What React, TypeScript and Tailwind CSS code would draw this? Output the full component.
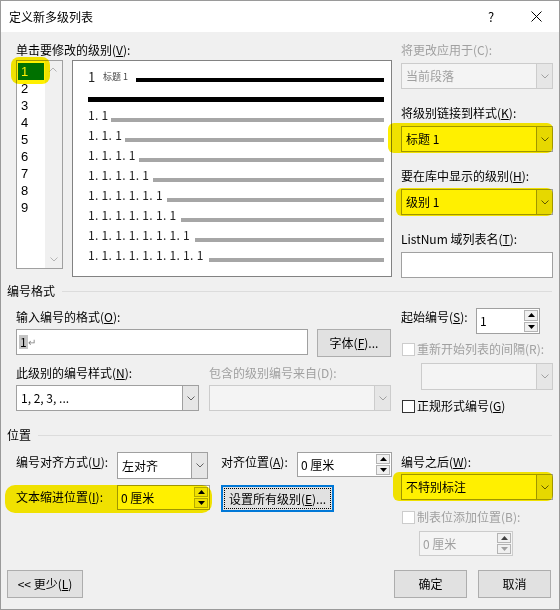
import React from "react";

const FONT = "font-['Noto_Sans_CJK_SC',sans-serif]";

function Chevron({ color = "#606060" }: { color?: string }) {
  return (
    <svg width="8" height="5" viewBox="0 0 8 5">
      <path d="M0.5 0.5 L4 4 L7.5 0.5" fill="none" stroke={color} strokeWidth="1" />
    </svg>
  );
}

function Tri({ up, color = "#000" }: { up?: boolean; color?: string }) {
  return (
    <svg width="7" height="4" viewBox="0 0 7 4">
      <path d={up ? "M0 4 L3.5 0 L7 4 Z" : "M0 0 L3.5 4 L7 0 Z"} fill={color} />
    </svg>
  );
}

function Combo({ value, className, disabled = false }: { value?: string; className: string; disabled?: boolean }) {
  return (
    <div
      className={`flex border ${
        disabled ? "border-[#cccccc] bg-[#f4f4f4] text-[#a0a0a0]" : "border-[#a0a0a0] bg-white text-black"
      } ${className}`}
    >
      <div className="flex flex-1 items-center pl-[4px] whitespace-nowrap">{value}</div>
      <div
        className={`flex w-[16px] items-center justify-center border-l ${
          disabled ? "border-[#cccccc] bg-[#e6e6e6]" : "border-[#a0a0a0] bg-[#e6e6e6]"
        }`}
      >
        <Chevron color={disabled ? "#a0a0a0" : "#606060"} />
      </div>
    </div>
  );
}

function Spin({ value, className, disabled = false }: { value: string; className: string; disabled?: boolean }) {
  return (
    <div
      className={`flex border ${
        disabled ? "border-[#cccccc] bg-[#f4f4f4] text-[#a0a0a0]" : "border-[#a0a0a0] bg-white text-black"
      } ${className}`}
    >
      <div className="flex flex-1 items-center pl-[3px] whitespace-nowrap">{value}</div>
      <div className="flex w-[16px] flex-col gap-[1px] p-[1px]">
        <div className="flex flex-1 items-center justify-center border border-[#b4b4b4] bg-[#f0f0f0]">
          <Tri up color={disabled ? "#404040" : "#000"} />
        </div>
        <div className="flex flex-1 items-center justify-center border border-[#b4b4b4] bg-[#f0f0f0]">
          <Tri color={disabled ? "#a0a0a0" : "#000"} />
        </div>
      </div>
    </div>
  );
}

function Btn({ children, className, focused = false }: { children: React.ReactNode; className: string; focused?: boolean }) {
  if (focused) {
    return (
      <div className={`flex border-2 border-[#0078d7] bg-[#e1e1e1] ${className}`}>
        <div className="m-[1px] flex flex-1 items-center justify-center border border-dotted border-black whitespace-nowrap">
          {children}
        </div>
      </div>
    );
  }
  return (
    <div className={`flex items-center justify-center border border-[#adadad] bg-[#e1e1e1] whitespace-nowrap ${className}`}>
      {children}
    </div>
  );
}

function Check({ label, disabled = false }: { label: React.ReactNode; disabled?: boolean }) {
  return (
    <div className="flex h-[16px] items-center">
      <div className={`ml-[1px] h-[13px] w-[13px] border bg-white ${disabled ? "border-[#cccccc]" : "border-[#333333]"}`} />
      <span className={`ml-[2px] whitespace-nowrap ${disabled ? "text-[#a0a0a0]" : ""}`}>{label}</span>
    </div>
  );
}

function GroupHeader({ title }: { title: string }) {
  return (
    <div className="flex h-[16px] items-center pl-[6px] pr-[7px]">
      <span>{title}</span>
      <div className="ml-[7px] h-px flex-1 bg-[#dcdcdc]" />
    </div>
  );
}

function Label({ children, className = "", disabled = false }: { children: React.ReactNode; className?: string; disabled?: boolean }) {
  return (
    <div className={`h-[16px] leading-[16px] whitespace-nowrap ${disabled ? "text-[#a0a0a0]" : ""} ${className}`}>
      {children}
    </div>
  );
}

const levelWidths = ["w-[23px]", "w-[37px]", "w-[51px]", "w-[65px]", "w-[79px]", "w-[93px]", "w-[107px]", "w-[121px]"];

function Preview() {
  return (
    <div className="ml-[9px] flex h-[217px] w-[320px] flex-col border border-[#828282] bg-white pl-[15px] pr-[7px] pt-[8px] text-[#222]">
      <div className="flex h-[16px] items-center">
        <span className="w-[15px] text-[13px] leading-[16px]">1</span>
        <span className="w-[33px] text-[9px] leading-[16px] text-[#444]">标题 1</span>
        <div className="mt-[6px] h-[4px] flex-1 bg-black" />
      </div>
      <div className="mt-[12px] h-[5px] bg-black" />
      <div className="mt-[3px] flex flex-col">
        {levelWidths.map((w, i) => (
          <div key={i} className="flex h-[20px] items-center">
            <span className={`${w} shrink-0 tracking-[0.3px] leading-[16px] whitespace-nowrap`}>
              {Array.from({ length: i + 2 }, () => "1").join(". ")}
            </span>
            <div className="mt-[10px] h-[4px] flex-1 bg-[#a6a6a6]" />
          </div>
        ))}
      </div>
    </div>
  );
}

function LevelList() {
  return (
    <div className="flex h-[209px] w-[47px] border border-[#a0a0a0] bg-white">
      <div className="flex w-[28px] flex-col px-[1px] pt-[2px] font-['Liberation_Sans',sans-serif] text-[13px] leading-[15px]">
        {[1, 2, 3, 4, 5, 6, 7, 8, 9].map((n) => (
          <div
            key={n}
            className={`flex h-[17px] items-center pl-[3px] ${n === 1 ? "bg-[#0078d7] text-white" : "text-black"}`}
          >
            {n}
          </div>
        ))}
      </div>
      <div className="flex w-[17px] flex-col justify-between bg-[#f0f0f0]">
        <div className="flex h-[17px] rotate-180 items-center justify-center">
          <Chevron color="#b4b4b4" />
        </div>
        <div className="flex h-[17px] items-center justify-center">
          <Chevron color="#b4b4b4" />
        </div>
      </div>
    </div>
  );
}

export default function App() {
  return (
    <div className={`relative flex h-[610px] w-[560px] flex-col border border-[#9a9a9a] bg-[#f0f0f0] text-[12px] leading-[16px] text-black ${FONT}`}>
      {/* title bar */}
      <div className="flex h-[31px] items-center bg-white">
        <span className="pl-[8px]">定义新多级列表</span>
        <div className="ml-auto flex h-full">
          <div className="flex w-[46px] items-center justify-center text-[13px]">?</div>
          <div className="flex w-[45px] items-center justify-center">
            <svg width="11" height="11" viewBox="0 0 11 11">
              <path d="M0.5 0.5 L10.5 10.5 M10.5 0.5 L0.5 10.5" stroke="#000" strokeWidth="1" />
            </svg>
          </div>
        </div>
      </div>

      {/* levels + preview */}
      <div className="flex h-[251px] pl-[15px] pt-[10px]">
        <div className="flex w-[376px] flex-col">
          <Label>
            单击要修改的级别(<u>V</u>):
          </Label>
          <div className="mt-[2px] flex items-start">
            <LevelList />
            <Preview />
          </div>
        </div>
        <div className="ml-[9px] flex w-[152px] flex-col">
          <Label disabled>将更改应用于(C):</Label>
          <Combo className="mt-[5px] h-[26px]" value="当前段落" disabled />
          <Label className="mt-[16px]">
            将级别链接到样式(<u>K</u>):
          </Label>
          <Combo className="mt-[5px] h-[26px]" value="标题 1" />
          <Label className="mt-[16px]">
            要在库中显示的级别(<u>H</u>):
          </Label>
          <Combo className="mt-[5px] h-[26px]" value="级别 1" />
          <Label className="mt-[16px]">
            ListNum 域列表名(<u>T</u>):
          </Label>
          <div className="mt-[5px] h-[26px] border border-[#a0a0a0] bg-white" />
        </div>
      </div>

      <GroupHeader title="编号格式" />

      {/* number format */}
      <div className="flex h-[128px] pl-[15px]">
        <div className="flex w-[376px] flex-col pt-[10px]">
          <Label>
            输入编号的格式(<u>O</u>):
          </Label>
          <div className="mt-[4px] flex h-[28px] items-start">
            <div className="flex h-[26px] w-[292px] items-center border border-[#a0a0a0] bg-white pl-[2px]">
              <span className="bg-[#c4c4c4] px-px leading-[14px]">1</span>
              <span className="text-[10px] text-[#808080]">↵</span>
            </div>
            <Btn className="ml-[9px] h-[28px] w-[74px]">
              字体(<u>F</u>)...
            </Btn>
          </div>
          <div className="mt-[8px] flex">
            <Label className="w-[193px]">
              此级别的编号样式(<u>N</u>):
            </Label>
            <Label disabled>包含的级别编号来自(D):</Label>
          </div>
          <div className="mt-[4px] flex">
            <Combo className="h-[26px] w-[183px]" value="1, 2, 3, ..." />
            <Combo className="ml-[10px] h-[26px] w-[182px]" disabled />
          </div>
        </div>
        <div className="ml-[9px] flex w-[152px] flex-col pt-[9px]">
          <div className="flex items-start">
            <Label className="mt-[1px] w-[75px]">
              起始编号(<u>S</u>):
            </Label>
            <Spin className="h-[26px] w-[64px]" value="1" />
          </div>
          <div className="mt-[7px]">
            <Check label="重新开始列表的间隔(R):" disabled />
          </div>
          <Combo className="ml-[20px] mt-[6px] h-[27px] w-[132px]" disabled />
          <div className="mt-[8px]">
            <Check
              label={
                <>
                  正规形式编号(<u>G</u>)
                </>
              }
            />
          </div>
        </div>
      </div>

      <GroupHeader title="位置" />

      {/* position */}
      <div className="flex h-[127px] pl-[15px]">
        <div className="flex w-[376px] flex-col pt-[9px]">
          <div className="flex items-start">
            <Label className="mt-[2px] w-[101px]">
              编号对齐方式(<u>U</u>):
            </Label>
            <Combo className="h-[27px] w-[91px]" value="左对齐" />
            <Label className="ml-[13px] mt-[2px] w-[76px]">
              对齐位置(<u>A</u>):
            </Label>
            <Spin className="h-[25px] w-[95px]" value="0 厘米" />
          </div>
          <div className="mt-[6px] flex items-start">
            <Label className="mt-[4px] w-[101px]">
              文本缩进位置(<u>I</u>):
            </Label>
            <Spin className="h-[25px] w-[93px]" value="0 厘米" />
            <Btn className="ml-[11px] h-[27px] w-[113px]" focused>
              设置所有级别(<u>E</u>)...
            </Btn>
          </div>
        </div>
        <div className="ml-[9px] flex w-[152px] flex-col pt-[11px]">
          <Label>
            编号之后(<u>W</u>):
          </Label>
          <Combo className="mt-[4px] h-[26px]" value="不特别标注" />
          <div className="mt-[9px]">
            <Check label="制表位添加位置(B):" disabled />
          </div>
          <Spin className="ml-[18px] mt-[6px] h-[25px] w-[94px]" value="0 厘米" disabled />
        </div>
      </div>

      {/* buttons */}
      <div className="flex pl-[6px] pr-[8px]">
        <Btn className="h-[28px] w-[76px]">
          &lt;&lt; 更少(<u>L</u>)
        </Btn>
        <Btn className="ml-auto h-[28px] w-[73px]">确定</Btn>
        <Btn className="ml-[11px] h-[28px] w-[73px]">取消</Btn>
      </div>

      {/* yellow marker highlights drawn over the dialog */}
      <div className="pointer-events-none absolute left-[10px] top-[56px] h-[27px] w-[39px] rounded-[8px] bg-[#fff000] mix-blend-multiply" />
      <div className="pointer-events-none absolute left-[387px] top-[122px] h-[30px] w-[165px] rounded-[6px] bg-[#fff000] mix-blend-multiply" />
      <div className="pointer-events-none absolute left-[395px] top-[187px] h-[28px] w-[157px] rounded-[6px] bg-[#fff000] mix-blend-multiply" />
      <div className="pointer-events-none absolute left-[4px] top-[484px] h-[28px] w-[207px] rounded-[10px] bg-[#fff000] mix-blend-multiply" />
      <div className="pointer-events-none absolute left-[392px] top-[471px] h-[29px] w-[160px] rounded-[6px] bg-[#fff000] mix-blend-multiply" />
    </div>
  );
}
